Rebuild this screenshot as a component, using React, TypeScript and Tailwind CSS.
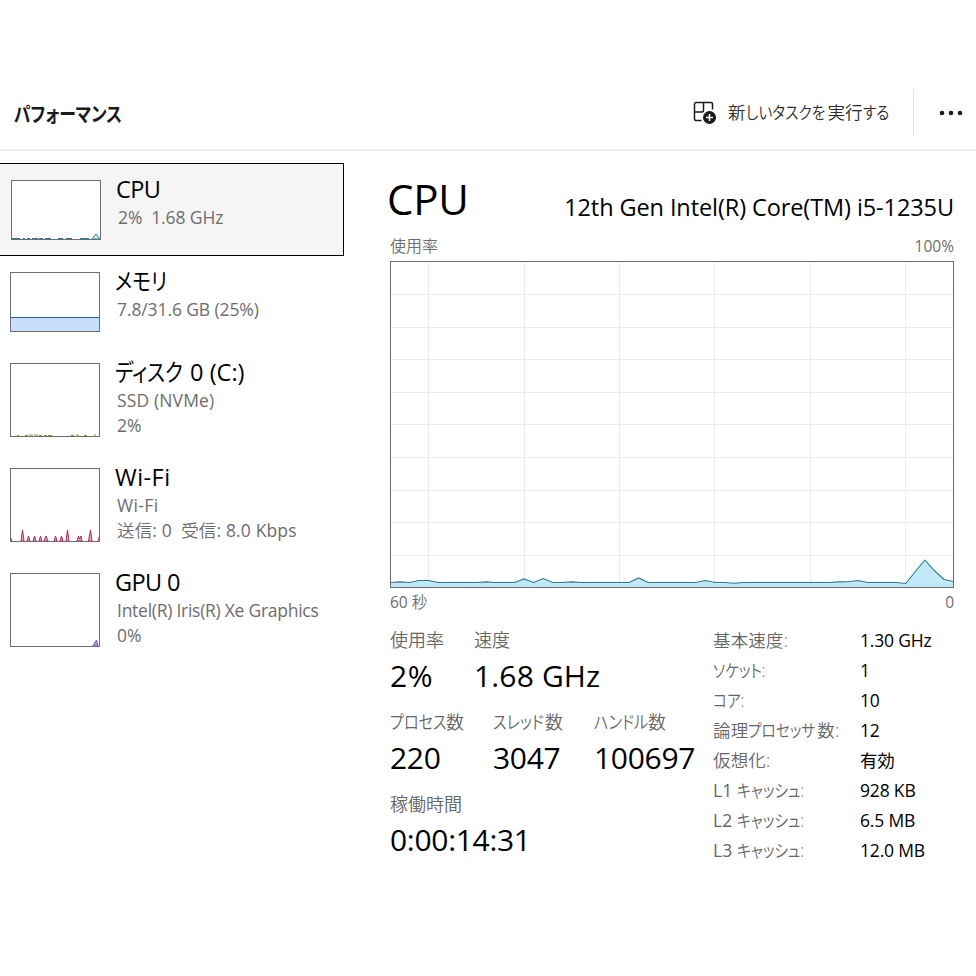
import type { ReactNode } from "react";

const cpuHistory = [
  5, 5.6, 5, 7, 7, 5, 5, 5, 5, 5, 5.6, 5, 5, 5, 8.6, 5, 8.9, 5, 5, 5.6, 5, 5, 5, 5, 5, 5, 9.6, 5, 5, 5, 5, 5, 5, 7, 5,
  5, 4.2, 5, 5, 5, 5, 5, 5, 5, 5, 5, 5, 5.6, 5.8, 7, 5, 5, 5, 5, 4, 16, 27.5, 17, 8, 6,
];

const hLines = [33, 66, 98, 131, 163, 196, 229, 261, 294];
const vLines = [38, 134, 229, 324, 420, 515];

function CpuChart() {
  const points = cpuHistory.map((v, i) => `${(0.5 + (i * 563) / (cpuHistory.length - 1)).toFixed(1)},${326.5 - v}`);
  return (
    <svg width="564" height="327" viewBox="0 0 564 327" className="block">
      <g stroke="#ebebeb" strokeWidth="1">
        {hLines.map((y) => (
          <line key={y} x1="0" x2="564" y1={y + 0.5} y2={y + 0.5} />
        ))}
        {vLines.map((x) => (
          <line key={x} x1={x + 0.5} x2={x + 0.5} y1="0" y2="327" />
        ))}
      </g>
      <polygon points={`0.5,326.5 ${points.join(" ")} 563.5,326.5`} fill="#c1e9f8" />
      <polyline points={points.join(" ")} fill="none" stroke="#2f7a92" strokeWidth="1.1" />
      <rect x="0.5" y="0.5" width="563" height="326" fill="none" stroke="#6b6b6b" />
    </svg>
  );
}

function Thumb({ height, children }: { height: number; children?: ReactNode }) {
  return (
    <svg width="90" height={height} viewBox={`0 0 90 ${height}`} className="block shrink-0">
      <rect x="0.5" y="0.5" width="89" height={height - 1} fill="#fff" />
      {children}
      <rect x="0.5" y="0.5" width="89" height={height - 1} fill="none" stroke="#6e6e72" />
    </svg>
  );
}

function NavItem({ thumb, title, lines }: { thumb: ReactNode; title: ReactNode; lines: ReactNode[] }) {
  return (
    <div className="flex pl-2.5">
      <div className="pt-4">{thumb}</div>
      <div className="pt-[11px] pl-[15px]">
        <div className="h-[30px] text-[23.5px] leading-[28px] tracking-[-0.025em] text-black">{title}</div>
        {lines.map((line, i) => (
          <div key={i} className="pl-0.5 text-[17.5px] leading-[25px] tracking-[-0.006em] text-[#6d6d6d]">
            {line}
          </div>
        ))}
      </div>
    </div>
  );
}

function Stat({ label, value, className }: { label: ReactNode; value: ReactNode; className?: string }) {
  return (
    <div className={className}>
      <div className="text-[18px] leading-[30px] font-[350] text-[#666]">{label}</div>
      <div className="pt-[3px] text-[30px] leading-[36px] tracking-[-0.01em] text-black">{value}</div>
    </div>
  );
}

// condensed kana; width is the advance left for the run after squeezing
function Kana({ width, children }: { width: string; children: ReactNode }) {
  return (
    <span className={`inline-block origin-left scale-x-[0.84] tracking-normal [font-feature-settings:'palt'] ${width}`}>
      {children}
    </span>
  );
}

const details: [ReactNode, string][] = [
  ["基本速度:", "1.30 GHz"],
  [<Kana width="w-14">ソケット:</Kana>, "1"],
  [<Kana width="w-8">コア:</Kana>, "10"],
  [<>論理<Kana width="w-[69px]">プロセッサ</Kana>数:</>, "12"],
  ["仮想化:", "有効"],
  [<><span className="font-normal">L1</span> <Kana width="w-[70px]">キャッシュ:</Kana></>, "928 KB"],
  [<><span className="font-normal">L2</span> <Kana width="w-[70px]">キャッシュ:</Kana></>, "6.5 MB"],
  [<><span className="font-normal">L3</span> <Kana width="w-[70px]">キャッシュ:</Kana></>, "12.0 MB"],
];

export default function App() {
  return (
    <div className="h-[976px] w-[976px] overflow-hidden bg-white pt-[76px] font-['Open_Sans','Noto_Sans_CJK_JP',sans-serif] whitespace-nowrap">
      <header className="flex h-[75px] items-center border-b-2 border-[#ececec] pl-3.5">
        <h1 className="pt-[5px] text-[20px] leading-[28px] font-semibold text-[#1a1a1a]">
          <Kana width="w-[110px]">パフォーマンス</Kana>
        </h1>
        <div className="ml-auto flex items-center">
          <svg width="24" height="24" viewBox="0 0 24 24" fill="none" stroke="#1b1b1b" strokeWidth="1.5" className="mr-[11px]">
            <path d="M8.500 19.500H3a1.500 1.500 0 0 1-1.500-1.500V3A1.500 1.500 0 0 1 3 1.500h15A1.500 1.500 0 0 1 19.500 3v5.500M1.500 11H9a1.500 1.500 0 0 0 1.500-1.500v-8" />
            <circle cx="16.500" cy="16.500" r="6.5" fill="#1b1b1b" stroke="none" />
            <path d="M16.500 13v7M13 16.500h7" stroke="#fff" />
          </svg>
          <span className="w-[165px] pb-0.5 text-[17.5px] leading-[28px] font-[350] text-[#2a2a2a]">
            新<Kana width="w-[82px]">しいタスクを</Kana>実行<Kana width="w-7">する</Kana>
          </span>
          <div className="ml-5 h-12 w-px bg-[#e5e5e5]" />
          <svg width="24" height="6" viewBox="0 0 24 6" fill="#1b1b1b" className="mr-[13px] ml-[25px]">
            <circle cx="3" cy="3" r="2.3" />
            <circle cx="12" cy="3" r="2.3" />
            <circle cx="21" cy="3" r="2.3" />
          </svg>
        </div>
      </header>

      <div className="flex">
        <nav className="w-[344px] shrink-0 pt-3">
          <div className="h-[93px] border border-l-0 border-black bg-[#f5f5f5] pl-px">
            <NavItem
              thumb={
                <Thumb height={60}>
                  <path d="M1 58.5h8M12 58.5h2M16 58.5h3M21 58.5h6M28 58.5h4M34 58.5h6M47 58.5h5M55 58.5h6M69 58.5h9" stroke="#2b7a94" />
                  <path d="M81 59l4-5 4 5z" fill="#c1e9f8" stroke="#3a87a3" />
                </Thumb>
              }
              title="CPU"
              lines={[<>2%&nbsp; 1.68 GHz</>]}
            />
          </div>
          <div className="h-[91px]">
            <NavItem
              thumb={
                <Thumb height={60}>
                  <path d="M1 45.5h88V60H1z" fill="#c7defd" />
                  <path d="M1 45.5h88" stroke="#2a5f9e" />
                </Thumb>
              }
              title={<Kana width="w-[52px]">メモリ</Kana>}
              lines={["7.8/31.6 GB (25%)"]}
            />
          </div>
          <div className="h-[105px]">
            <NavItem
              thumb={
                <Thumb height={74}>
                  <path d="M7 72.500h2M15 72.500h3M19 72h4M24 72h4M29 72.500h3M34 72.500h3M38 72.500h4M61 72.500h3M66 72h3M74 72.500h3M84 72h2" stroke="#8d8a3c" />
                </Thumb>
              }
              title={<><Kana width="w-[69px]">ディスク</Kana><span className="tracking-normal"> 0 (C:)</span></>}
              lines={[<span className="tracking-[0.008em]">SSD (NVMe)</span>, "2%"]}
            />
          </div>
          <div className="h-[105px]">
            <NavItem
              thumb={
                <Thumb height={74}>
                  <path
                    d="M0 68l2 5M11 73l1.500-11 1.500 11zM17 73l1.500-5 1.500 5zM23 73l1.500-5 1.500 5zM29 73l1.500-5 1.500 5zM34 73l2-5 2 5zM44 73l1.500-5 1.500 5zM50 73l1.500-5 1.500 5zM56 73l1.500-11 1.500 11zM67 73l1.500-5 1 3 1.500-3 1 5zM78.500 73l2-11 1.500 11zM88 73l1.500-5"
                    fill="#e9a9bd"
                    stroke="#b02a5b"
                  />
                </Thumb>
              }
              title={<span className="tracking-[0.02em]">Wi-Fi</span>}
              lines={[
                <span className="tracking-[0.02em]">Wi-Fi</span>,
                <span className="tracking-[0.008em]"><span className="font-[350]">送信</span>: 0&nbsp; <span className="font-[350]">受信</span>: 8.0 Kbps</span>,
              ]}
            />
          </div>
          <div className="h-[105px]">
            <NavItem
              thumb={
                <Thumb height={74}>
                  <path d="M83 73l3.500-6 1.500 6z" fill="#b79be0" stroke="#7a4fbf" />
                </Thumb>
              }
              title="GPU 0"
              lines={[<span className="tracking-[-0.015em]">Intel(R) Iris(R) Xe Graphics</span>, "0%"]}
            />
          </div>
        </nav>

        <main className="ml-[46px] w-[564px] pt-[22px] text-black">
          <div className="flex items-end justify-between">
            <h2 className="-ml-[3px] text-[42px] leading-[52px] tracking-[-0.005em]">CPU</h2>
            <span className="text-[23.5px] leading-[35px] tracking-[-0.004em]">12th Gen Intel(R) Core(TM) i5-1235U</span>
          </div>
          <div className="flex h-9 justify-between pt-[9px] text-[15px] leading-[24px] text-[#6d6d6d]">
            <span className="text-[16px] font-[350]">使用率</span>
            <span className="text-[15.5px]">100%</span>
          </div>
          <CpuChart />
          <div className="flex h-[37px] justify-between text-[15.5px] leading-[28px] text-[#6d6d6d]">
            <span>60 <span className="font-[350]">秒</span></span>
            <span>0</span>
          </div>
          <div className="flex">
            <div className="w-[323px] shrink-0">
              <div className="flex h-[82px]">
                <Stat label="使用率" value={<span className="tracking-[0.02em]">2%</span>} className="w-[84px]" />
                <Stat label="速度" value={<span className="tracking-[0.005em]">1.68 GHz</span>} />
              </div>
              <div className="flex h-[82px]">
                <Stat label={<><Kana width="w-[56px]">プロセス</Kana>数</>} value="220" className="w-[103px]" />
                <Stat label={<><Kana width="w-[52px]">スレッド</Kana>数</>} value="3047" className="w-[101px]" />
                <Stat label={<><Kana width="w-[54px]">ハンドル</Kana>数</>} value="100697" />
              </div>
              <Stat label="稼働時間" value="0:00:14:31" />
            </div>
            <dl className="grid grid-cols-[147px_auto] text-[17.5px] leading-[30px]">
              {details.map(([label, value], i) => (
                <div key={i} className="contents">
                  <dt className="h-[30px] font-[350] tracking-[0.01em] text-[#666]">{label}</dt>
                  <dd className="h-[30px] tracking-[-0.01em]">{value}</dd>
                </div>
              ))}
            </dl>
          </div>
        </main>
      </div>
    </div>
  );
}
